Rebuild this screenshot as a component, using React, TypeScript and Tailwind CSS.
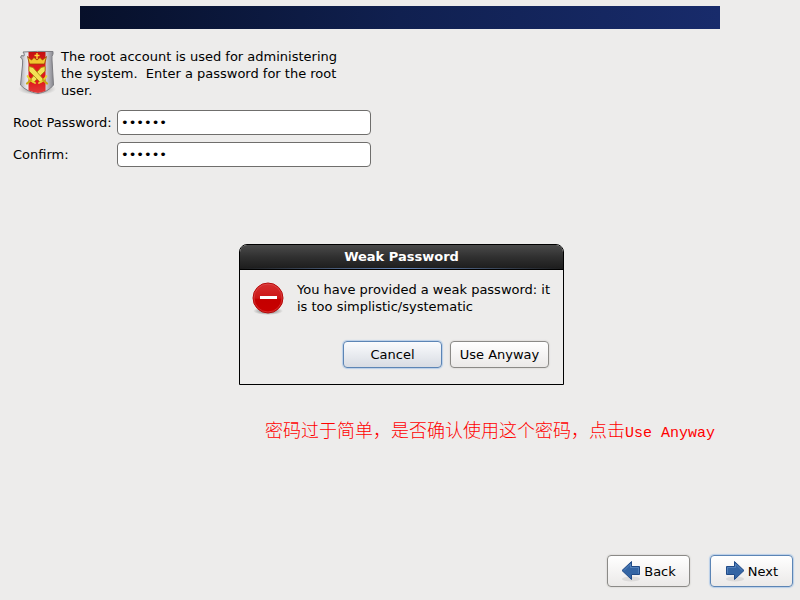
import { useState } from "react";
import type { ReactNode } from "react";

function ShieldIcon() {
  return (
    <svg width="40" height="48" viewBox="0 0 40 48" className="shrink-0" aria-hidden="true">
      <defs>
        <linearGradient id="steel" x1="0" y1="0" x2="1" y2="0">
          <stop offset="0" stopColor="#a9a9ae" />
          <stop offset="0.15" stopColor="#dedee2" />
          <stop offset="0.3" stopColor="#f8f8fa" />
          <stop offset="0.75" stopColor="#d4d4d9" />
          <stop offset="1" stopColor="#85858c" />
        </linearGradient>
        <linearGradient id="stripe" x1="0" y1="0" x2="0" y2="1">
          <stop offset="0" stopColor="#c41010" />
          <stop offset="0.3" stopColor="#de1c1c" />
          <stop offset="0.7" stopColor="#e01818" />
          <stop offset="1" stopColor="#e03a3a" />
        </linearGradient>
        <radialGradient id="shade">
          <stop offset="0" stopColor="#000" stopOpacity="0.45" />
          <stop offset="1" stopColor="#000" stopOpacity="0" />
        </radialGradient>
      </defs>
      <ellipse cx="20" cy="41" rx="19" ry="6" fill="url(#shade)" />
      <path
        d="M6 4Q20 3 36 3.500V6Q34.500 8 35 12L36.500 37Q31 44 21 45.500Q10 44 3.500 37L5.500 17Q6 12 5 10.500L3.500 9.500L4.500 7.500L7 8Q8 6 6 4Z"
        fill="url(#steel)"
        stroke="#7d7d82"
      />
      <path d="M11.500 4H28.500V43Q24.500 44.500 21 45Q16 44 11.500 42.500Z" fill="url(#stripe)" />
      <path
        d="M10.500 8.500L14.500 12L17 9.500L20 12L23 9.500L25.500 12L29.500 8.500L27.500 16H12.500Z"
        fill="#f2c530"
        stroke="#9a4200"
        strokeWidth="0.8"
      />
      <path d="M20 5V11M17.500 7.500H22.500" stroke="#ffd83c" strokeWidth="1.400" />
      <g fill="#f4e256" stroke="#a3860c" strokeWidth="0.8">
        <path d="M28 18.500L28 23L16 35L13 32L24 19.500Z" />
        <path d="M12 18.500L12 23L24 35L27 32L16 19.500Z" />
      </g>
      <path
        d="M10.500 28Q12.500 32 18 35M29.500 28Q27.500 32 22 35"
        fill="none"
        stroke="#e8d034"
        strokeWidth="1.800"
        strokeLinecap="round"
      />
      <path d="M14 32L10 35.500M26 32L30 35.500" stroke="#c9a812" strokeWidth="2.200" strokeLinecap="round" />
    </svg>
  );
}

function StopIcon() {
  return (
    <svg width="34" height="36" viewBox="0 0 34 36" className="shrink-0" aria-hidden="true">
      <defs>
        <linearGradient id="stop-red" x1="0" y1="0" x2="0" y2="1">
          <stop offset="0" stopColor="#d63030" />
          <stop offset="0.5" stopColor="#cc1616" />
          <stop offset="0.55" stopColor="#c40000" />
          <stop offset="1" stopColor="#c80000" />
        </linearGradient>
        <radialGradient id="stop-shade">
          <stop offset="0" stopColor="#000" stopOpacity="0.6" />
          <stop offset="1" stopColor="#000" stopOpacity="0" />
        </radialGradient>
      </defs>
      <ellipse cx="17" cy="30" rx="15" ry="4" fill="url(#stop-shade)" />
      <circle cx="17" cy="17" r="15" fill="url(#stop-red)" stroke="#b50a0a" />
      <circle cx="17" cy="17" r="14" fill="none" stroke="#e35a5a" strokeOpacity="0.500" />
      <rect x="9" y="15" width="17" height="3" fill="#fff" />
    </svg>
  );
}

function ArrowIcon({ direction }: { direction: "left" | "right" }) {
  return (
    <svg width="20" height="22" viewBox="0 0 20 22" className="shrink-0" aria-hidden="true">
      <ellipse cx="10" cy="19" rx="9" ry="2.500" fill="#000" fillOpacity="0.080" />
      <g transform={direction === "left" ? "translate(20 0) scale(-1 1)" : undefined}>
        <path
          d="M1.500 6.500H9.500V1.500L19 10.500L9.500 19.500V14.500H1.500Z"
          fill="#3465a4"
          stroke="#204a87"
          strokeLinejoin="round"
        />
        <path d="M2.500 13.500V7.500H10.500V4L17 10.500" fill="none" stroke="#6f9bd0" strokeOpacity="0.500" />
      </g>
    </svg>
  );
}

function PushButton({
  children,
  className,
  focused = false,
}: {
  children: ReactNode;
  className: string;
  focused?: boolean;
}) {
  return (
    <button
      type="button"
      className={`flex items-center justify-center rounded-[4px] border ${
        focused ? "border-[#5c85b5] shadow-[0_0_1px_1px_#b9cfe8]" : "border-[#8b8a87] shadow-[0_0_1px_1px_#e1e0de]"
      } ${className}`}
    >
      {children}
    </button>
  );
}

function PasswordRow({
  id,
  label,
  value,
  onChange,
}: {
  id: string;
  label: string;
  value: string;
  onChange: (value: string) => void;
}) {
  return (
    <div className="flex items-center">
      <label htmlFor={id} className="w-[104px] whitespace-nowrap">
        {label}
      </label>
      <input
        id={id}
        type="password"
        value={value}
        onChange={(e) => onChange(e.target.value)}
        className="h-[25px] w-[254px] rounded-[4px] border border-[#6f6e6c] bg-white px-[3px] text-black outline-none"
      />
    </div>
  );
}

export default function App() {
  const [password, setPassword] = useState("secret");
  const [confirm, setConfirm] = useState("secret");

  return (
    <div className="flex min-h-screen flex-col bg-[#edeceb] font-['DejaVu_Sans',sans-serif] text-[13px] leading-[17px] text-black">
      <header className="mx-[10%] mt-[6px] h-[23px] bg-linear-to-r from-[#07102a] via-[#102050] to-[#182b6b]" />

      <main className="flex flex-col">
        <div className="mt-[19px] flex gap-[2px] pl-[17px]">
          <ShieldIcon />
          <p className="w-[290px] pl-[2px] whitespace-pre-wrap">
            {"The root account is used for administering the system.  Enter a password for the root user."}
          </p>
        </div>

        <form className="mt-[11px] flex flex-col gap-[7px] pl-[13px]" onSubmit={(e) => e.preventDefault()}>
          <PasswordRow id="password" label="Root Password:" value={password} onChange={setPassword} />
          <PasswordRow id="confirm" label="Confirm:" value={confirm} onChange={setConfirm} />
        </form>

        <div className="mt-[77px] flex justify-center pl-[3px]">
          <section
            role="dialog"
            aria-labelledby="dialog-title"
            className="w-[325px] rounded-t-[8px] border border-black"
          >
            <div className="rounded-t-[7px] border-b border-black bg-linear-to-b from-[#4a4a4a] via-[#303030] to-[#1c1c1c]">
              <h1 id="dialog-title" className="text-center leading-[23px] font-bold text-white">
                Weak Password
              </h1>
              <div className="h-px bg-linear-to-r from-[#1c1c1c] via-[#6a8cc0] to-[#1c1c1c]" />
            </div>
            <div className="flex gap-3 pt-[11px] pl-[11px]">
              <StopIcon />
              <p className="w-[260px]">You have provided a weak password: it is too simplistic/systematic</p>
            </div>
            <div className="mt-[24px] mb-4 flex justify-end gap-2 pr-[14px]">
              <PushButton focused className="h-[27px] w-[99px] bg-linear-to-b from-[#fafbfd] to-[#d8dce3]">
                Cancel
              </PushButton>
              <PushButton className="h-[27px] w-[99px] bg-linear-to-b from-white to-[#ebe9e8]">Use Anyway</PushButton>
            </div>
          </section>
        </div>

        <p className="mt-[35px] pr-[85px] text-right font-['Liberation_Mono','Noto_Sans_CJK_SC',monospace] text-[15px] leading-6 text-[#f00]">
          <span lang="zh-CN" className="text-[18px] font-light">
            密码过于简单，是否确认使用这个密码，点击
          </span>
          Use Anyway
        </p>
      </main>

      <footer className="mt-auto mb-[13px] flex justify-end gap-5 pr-[7px]">
        <PushButton className="h-8 w-[83px] gap-[3px] bg-linear-to-b from-white to-[#ebe9e8]">
          <ArrowIcon direction="left" />
          Back
        </PushButton>
        <PushButton focused className="h-8 w-[83px] gap-[3px] bg-linear-to-b from-white to-[#ebe9e8]">
          <ArrowIcon direction="right" />
          Next
        </PushButton>
      </footer>
    </div>
  );
}
